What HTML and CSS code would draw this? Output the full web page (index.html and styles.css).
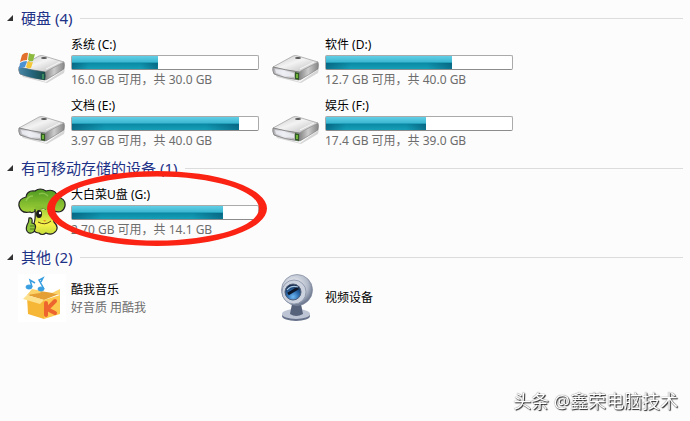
FILE: index.html
```html
<!DOCTYPE html>
<html lang="zh-CN">
<head>
<meta charset="UTF-8">
<meta name="viewport" content="width=device-width, initial-scale=1.0">
<title>计算机</title>
<link rel="stylesheet" href="styles.css">
</head>
<body>
  <!-- Shared drawings -->
  <svg class="defs" aria-hidden="true">
    <defs>
      <linearGradient id="metalTop" x1="0" y1="0" x2="1" y2="1">
        <stop offset="0" stop-color="#c4c4c4"/>
        <stop offset="0.45" stop-color="#f3f3f3"/>
        <stop offset="1" stop-color="#b5b5b5"/>
      </linearGradient>
      <linearGradient id="metalFront" x1="0" y1="0" x2="1" y2="0">
        <stop offset="0" stop-color="#a9a9ad"/>
        <stop offset="0.4" stop-color="#ececf2"/>
        <stop offset="1" stop-color="#9a9a9a"/>
      </linearGradient>
      <linearGradient id="metalSide" x1="0" y1="0" x2="1" y2="0">
        <stop offset="0" stop-color="#777"/>
        <stop offset="0.5" stop-color="#ccc"/>
        <stop offset="1" stop-color="#858585"/>
      </linearGradient>
      <linearGradient id="sysFront" x1="0" y1="0" x2="1" y2="0">
        <stop offset="0" stop-color="#4b87a5"/>
        <stop offset="0.5" stop-color="#25657c"/>
        <stop offset="1" stop-color="#174b45"/>
      </linearGradient>
      <linearGradient id="leaf" x1="0" y1="0" x2="0" y2="1">
        <stop offset="0" stop-color="#4c9820"/>
        <stop offset="1" stop-color="#a5d339"/>
      </linearGradient>
      <linearGradient id="stalk" x1="0" y1="0" x2="0" y2="1">
        <stop offset="0" stop-color="#a5d339"/>
        <stop offset="0.6" stop-color="#f7f14a"/>
        <stop offset="1" stop-color="#c3dc3a"/>
      </linearGradient>
      <radialGradient id="camBody" cx="0.4" cy="0.35" r="0.65">
        <stop offset="0" stop-color="#f4f6fa"/>
        <stop offset="0.7" stop-color="#b3bbca"/>
        <stop offset="1" stop-color="#6d7890"/>
      </radialGradient>
      <radialGradient id="camLens" cx="0.5" cy="0.8" r="0.8">
        <stop offset="0" stop-color="#6fb8f2"/>
        <stop offset="0.5" stop-color="#2867a9"/>
        <stop offset="1" stop-color="#101d35"/>
      </radialGradient>
      <symbol id="drive" viewBox="0 0 48 32">
        <path d="M3 22 L28 30 L47 17 L46 21 L29 31 L5 25z" fill="#000" opacity="0.15"/>
        <path d="M26 20 L46 10 Q47 13 46 17 L28 28 Q25 28 26 20z" fill="url(#metalSide)" stroke="#777" stroke-width="0.6"/>
        <path d="M1 15 L21 4 Q23 3 26 4 L46 10 L27 20 Q14 19 1 15z" fill="url(#metalTop)" stroke="#9a9a9a" stroke-width="0.7"/>
        <path d="M1 15 Q13 18 27 20 Q28 24 27 28 Q12 26 2 22 Q0 18 1 15z" fill="url(#metalFront)" stroke="#777" stroke-width="0.8"/>
        <path d="M3 17 Q12 19 22 21 V25 Q12 24 4 21z" fill="#efeff6" opacity="0.8"/>
        <path d="M23 20 L27 21 V28 L23 27z" fill="#315b24"/>
        <path d="M25 22 V26" stroke="#87cf43" stroke-width="1.5"/>
        <ellipse cx="26" cy="6" rx="3" ry="1" fill="#555"/>
        <path d="M28 17 L42 10" stroke="#fff" stroke-width="1" opacity="0.8"/>
      </symbol>
    </defs>
  </svg>

  <main class="explorer">
    <section class="group">
      <h2 class="group-title">硬盘 (4)</h2>
      <div class="tiles">
        <div class="tile">
          <svg class="icon drive" viewBox="0 0 48 32" aria-hidden="true">
            <use href="#drive"/>
            <path d="M1 15 Q13 18 27 20 Q28 24 27 28 Q12 26 2 22 Q0 18 1 15z" fill="url(#sysFront)"/>
            <path d="M25 22 V27" stroke="#5fc06d" stroke-width="1"/>
            <path d="M4 3 Q7 0 10 1 L9 8 Q5 8 2 10z" fill="#e36f2c"/>
            <path d="M11 1 Q14 3 17 2 L15 9 Q12 10 10 8z" fill="#8dbb3f"/>
            <path d="M2 11 Q5 9 9 9 L7 15 Q4 15 1 17z" fill="#4a92d4"/>
            <path d="M10 9 Q12 11 15 10 L13 16 Q10 17 8 15z" fill="#f5c738"/>
          </svg>
          <div class="info">
            <div class="name">系统 (C:)</div>
            <div class="bar"><div class="fill" style="width: 46%"></div></div>
            <div class="detail">16.0 GB 可用，共 30.0 GB</div>
          </div>
        </div>
        <div class="tile">
          <svg class="icon drive" aria-hidden="true"><use href="#drive"/></svg>
          <div class="info">
            <div class="name">软件 (D:)</div>
            <div class="bar"><div class="fill" style="width: 68%"></div></div>
            <div class="detail">12.7 GB 可用，共 40.0 GB</div>
          </div>
        </div>
        <div class="tile">
          <svg class="icon drive" aria-hidden="true"><use href="#drive"/></svg>
          <div class="info">
            <div class="name">文档 (E:)</div>
            <div class="bar"><div class="fill" style="width: 90%"></div></div>
            <div class="detail">3.97 GB 可用，共 40.0 GB</div>
          </div>
        </div>
        <div class="tile">
          <svg class="icon drive" aria-hidden="true"><use href="#drive"/></svg>
          <div class="info">
            <div class="name">娱乐 (F:)</div>
            <div class="bar"><div class="fill" style="width: 54%"></div></div>
            <div class="detail">17.4 GB 可用，共 39.0 GB</div>
          </div>
        </div>
      </div>
    </section>

    <section class="group">
      <h2 class="group-title">有可移动存储的设备 (1)</h2>
      <div class="tiles">
        <div class="tile">
          <svg class="icon" viewBox="0 0 48 48" aria-hidden="true">
            <path d="M12 24 Q3 26 1 18 Q0 11 8 9 Q9 2 17 3 Q22 -1 28 3 Q37 0 40 9 Q48 11 47 18 Q45 26 36 23 Q30 26 26 20 Q22 22 18 22 Q15 26 12 24z" fill="url(#leaf)" stroke="#222" stroke-width="1.2"/>
            <path d="M17 21 Q18 32 15 38 Q15 45 21 45 Q24 48 28 45 Q34 48 38 43 Q41 39 36 34 Q34 29 36 22" fill="url(#stalk)" stroke="#222" stroke-width="1.2"/>
            <path d="M16 18 H37 Q37 22 34 23 Q26 19 18 22z" fill="#86bf30"/>
            <path d="M8 13 Q10 8 15 8 M21 6 Q26 4 30 8" fill="none" stroke="#b5df70" stroke-width="1.5" opacity="0.5"/>
            <ellipse cx="21" cy="26" rx="3" ry="4" fill="#191919"/>
            <circle cx="22" cy="25" r="1.2" fill="#fff"/>
            <path d="M30 26 Q33 24 35 26 M20 34 Q27 38 33 33" fill="none" stroke="#5c4314" stroke-width="1"/>
            <path d="M25 32 L27 34 L28 32z" fill="#e89628"/>
            <path d="M11 30 Q15 29 14 35 Q19 36 17 41 Q16 46 11 45 Q7 43 9 37 Q11 34 11 30z" fill="#8fc63c" stroke="#222" stroke-width="1.2"/>
            <path d="M12 38 H17 M12 41 H16" stroke="#416b17" stroke-width="0.8"/>
          </svg>
          <div class="info">
            <div class="name">大白菜U盘 (G:)</div>
            <div class="bar"><div class="fill" style="width: 81%"></div></div>
            <div class="detail">2.70 GB 可用，共 14.1 GB</div>
          </div>
          <!-- Red ring round the USB drive -->
          <svg class="ring" viewBox="0 0 220 75" aria-hidden="true">
            <path fill="#fb2414" fill-rule="evenodd" d="M0 37.5 A110 37.5 0 0 1 220 37.5 A110 37.5 0 0 1 0 37.5z M8 37.5 A102 32 0 0 0 212 37.5 A102 32 0 0 0 8 37.5z"/>
          </svg>
        </div>
      </div>
    </section>

    <section class="group">
      <h2 class="group-title">其他 (2)</h2>
      <div class="tiles">
        <div class="tile">
          <svg class="icon" viewBox="0 0 48 48" aria-hidden="true">
            <rect width="48" height="48" fill="#fff"/>
            <path d="M9 22 L26 26 V45 L10 40z" fill="#f6b636"/>
            <path d="M26 26 L42 21 V40 L26 45z" fill="#fcc94e"/>
            <path d="M9 21 L22 17 L41 20 L26 26z" fill="#e5a035"/>
            <path d="M9 21 L26 26 L22 30 L5 25z" fill="#fde18c"/>
            <path d="M9 21 L14 15 L24 17 L22 19z M34 19 L42 15 L42 21z" fill="#fbd369"/>
            <path d="M28 29 V41 M37 27 L29 35 L37 39" fill="none" stroke="#ed642e" stroke-width="4" stroke-linecap="round"/>
            <g fill="#3a9fe0" stroke="#3a9fe0">
              <ellipse cx="11" cy="13" rx="3" ry="2"/>
              <path d="M14 13 L12 6 L17 9" fill="none" stroke-width="1.5"/>
              <ellipse cx="23" cy="15" rx="3" ry="2"/>
              <path d="M26 15 L21 6 L25 4 L23 8" fill="none" stroke-width="1.5"/>
            </g>
          </svg>
          <div class="info">
            <div class="name">酷我音乐</div>
            <div class="detail">好音质 用酷我</div>
          </div>
        </div>
        <div class="tile">
          <svg class="icon" viewBox="0 0 48 48" aria-hidden="true">
            <ellipse cx="24" cy="42" rx="14" ry="5" fill="#66718a"/>
            <ellipse cx="24" cy="40" rx="14" ry="5" fill="#bdc5d4"/>
            <path d="M20 30 H29 L31 40 Q24 44 18 40z" fill="#56617a"/>
            <circle cx="25" cy="16" r="15.5" fill="url(#camBody)" stroke="#7e889c" stroke-width="0.7"/>
            <circle cx="22" cy="18" r="12" fill="#ccd3df" stroke="#8791a5" stroke-width="0.8"/>
            <circle cx="21" cy="18" r="8" fill="url(#camLens)" stroke="#526079"/>
            <path d="M16 20 L26 14" fill="none" stroke="#0d1627" stroke-width="3"/>
            <path d="M15 16 Q19 11 26 13" fill="none" stroke="#a9c6e2" stroke-width="1.2"/>
          </svg>
          <div class="info">
            <div class="name">视频设备</div>
          </div>
        </div>
      </div>
    </section>
  </main>

  <div class="watermark">头条 @鑫荣电脑技术</div>
</body>
</html>
```
FILE: styles.css
```css
body {
  margin: 0;
  background: #fcfcfc;
  font-family: "Noto Sans", "Noto Sans CJK SC", sans-serif;
  font-size: 12px;
  color: #000;
}
.defs {
  position: absolute;
  width: 0;
  height: 0;
}
.explorer {
  padding: 8px 7px 0;
}
.group {
  margin-bottom: 9px;
}
.group-title {
  display: flex;
  align-items: center;
  gap: 8px;
  margin: 0 0 7px;
  font-size: 15px;
  font-weight: normal;
  line-height: 20px;
  color: #1e3287;
}
.group-title::before {
  content: "";
  width: 6px;
  height: 6px;
  background: #333;
  clip-path: polygon(100% 0, 100% 100%, 0 100%);
}
.group-title::after {
  content: "";
  flex: 1;
  height: 1px;
  background: #dcdcdc;
}
.tiles {
  display: grid;
  grid-template-columns: repeat(auto-fill, 241px);
  gap: 8px 13px;
  padding-left: 11px;
}
.tile {
  position: relative;
  display: flex;
  align-items: center;
  gap: 5px;
}
.icon {
  flex: none;
  width: 48px;
  height: 48px;
}
.drive {
  height: 32px;
  margin-top: 12px;
}
.info {
  flex: 1;
}
.name {
  line-height: 20px;
}
.bar {
  box-sizing: border-box;
  height: 15px;
  margin-bottom: 2px;
  border: 1px solid #aaa;
  border-bottom-color: #8c8c8c;
  border-radius: 2px;
  background: #fff;
}
.fill {
  height: 100%;
  background:
    linear-gradient(to right, rgba(0, 60, 90, 0.45), transparent 20%, transparent 80%, rgba(0, 60, 90, 0.45)) bottom / 100% 50% no-repeat,
    linear-gradient(#62cfe6, #3bb6d1 48%, #0a88a3 52%, #169fb8);
}
.detail {
  line-height: 16px;
  color: #6d6d6d;
}
.ring {
  position: absolute;
  left: 29px;
  top: -14px;
  width: 220px;
  height: 75px;
}
.watermark {
  position: fixed;
  right: 12px;
  bottom: 8px;
  font-size: 18px;
  line-height: 24px;
  color: #fff;
  text-shadow: 1px 1px 1px #222, 0 0 1px #444;
}
```
